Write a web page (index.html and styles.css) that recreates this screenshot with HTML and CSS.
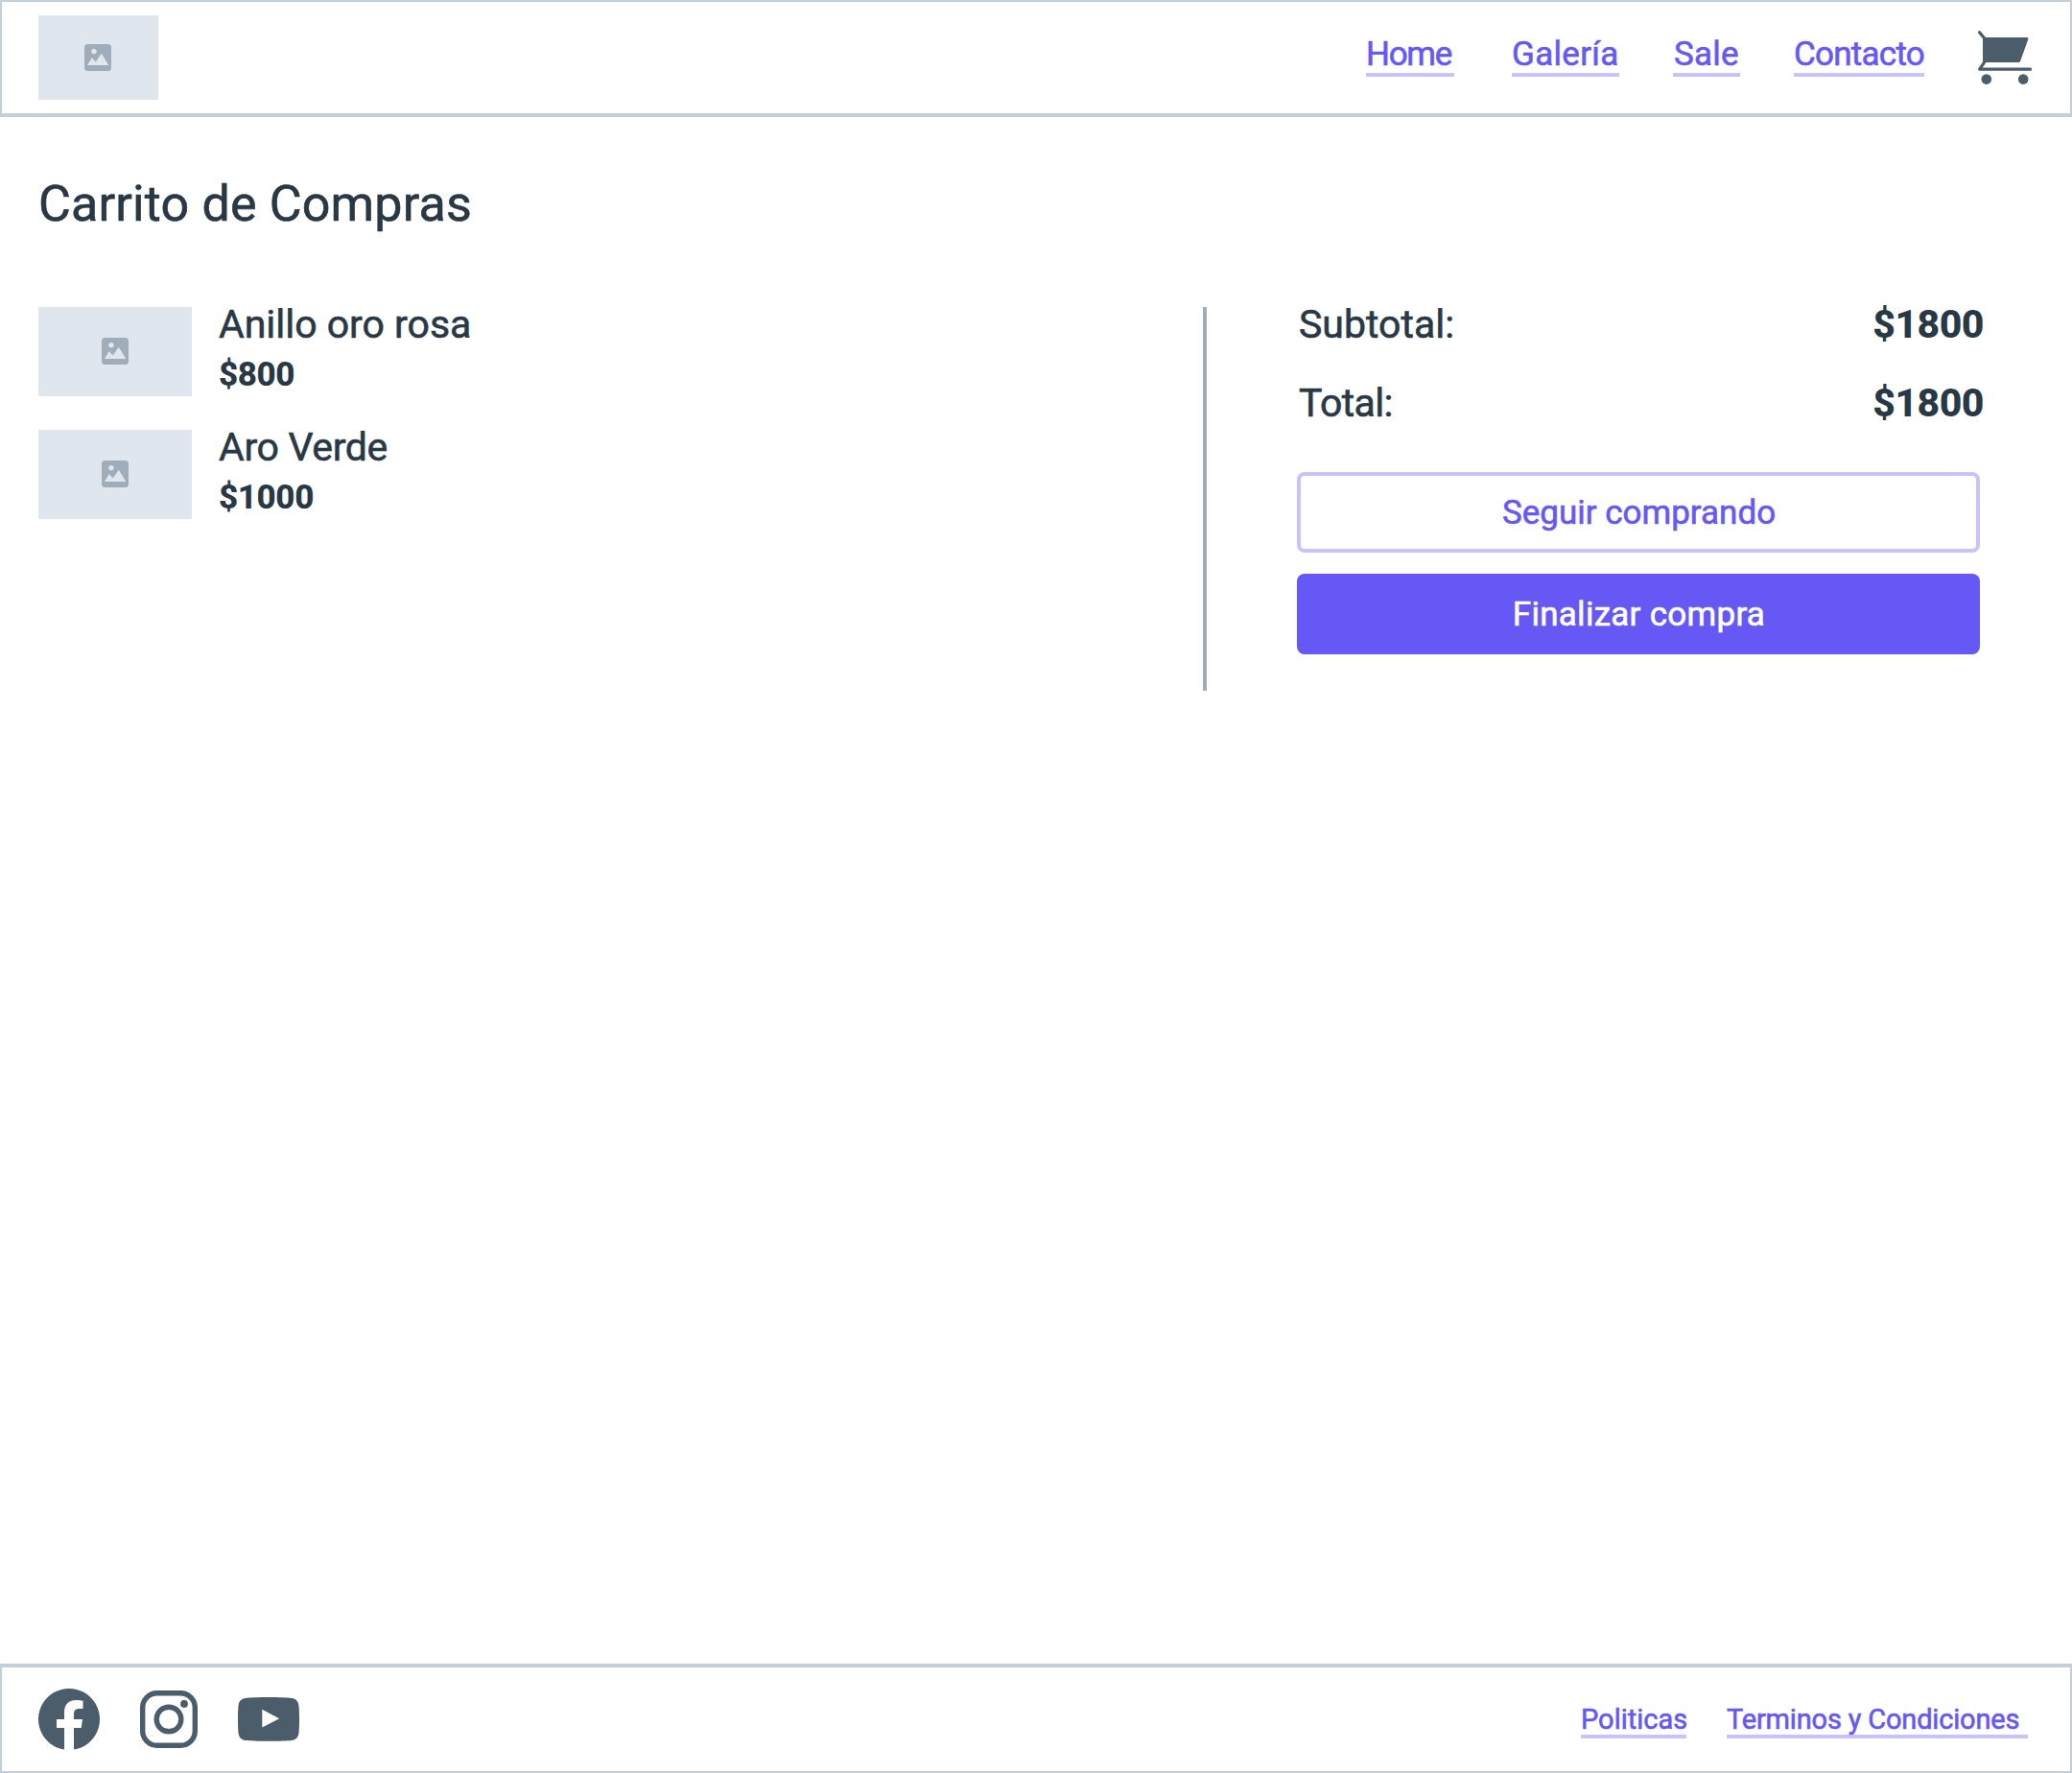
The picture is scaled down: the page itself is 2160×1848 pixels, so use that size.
FILE: index.html
```html
<!DOCTYPE html>
<html lang="es">
<head>
<meta charset="utf-8">
<title>Carrito de Compras</title>
<link rel="stylesheet" href="styles.css">
</head>
<body>
<svg class="sprite" aria-hidden="true">
  <symbol id="picture" viewBox="0 0 28 28">
    <path fill-rule="evenodd" d="M3.5 0H24.5Q28 0 28 3.5V24.5Q28 28 24.5 28H3.5Q0 28 0 24.5V3.5Q0 0 3.5 0ZM9.9 4.9a2.8 2.8 0 1 0 .01 0ZM3 22H25.3L17.8 9.7L11.7 18.6L7.8 14Z"/>
  </symbol>
</svg>
<header class="header">
  <div class="placeholder logo"><svg class="picture"><use href="#picture"/></svg></div>
  <nav class="nav">
    <a class="link home" href="#">Home</a>
    <a class="link gallery" href="#">Galería</a>
    <a class="link sale" href="#">Sale</a>
    <a class="link contact" href="#">Contacto</a>
  </nav>
  <svg class="cart-icon" viewBox="0 0 56 56">
    <path d="M1.600 1.800L7 8.300M6.500 33.200L1.700 40.200H54.500" fill="none" stroke="currentColor" stroke-width="3.200" stroke-linecap="round" stroke-linejoin="round"/>
    <path d="M5 7H51Q52.800 7.200 52.300 9L44 32Q43.600 33 42.600 33H5Z"/>
    <circle cx="8.800" cy="50.600" r="5.300"/>
    <circle cx="47.200" cy="50.600" r="5.300"/>
  </svg>
</header>
<main class="main">
  <h1 class="title">Carrito de Compras</h1>
  <div class="columns">
    <ul class="items">
      <li class="item">
        <div class="placeholder thumb"><svg class="picture"><use href="#picture"/></svg></div>
        <div><p class="name">Anillo oro rosa</p><p class="price">$800</p></div>
      </li>
      <li class="item">
        <div class="placeholder thumb"><svg class="picture"><use href="#picture"/></svg></div>
        <div><p class="name name-short">Aro Verde</p><p class="price">$1000</p></div>
      </li>
    </ul>
    <section class="summary">
      <div class="row"><span class="label">Subtotal:</span><span class="amount">$1800</span></div>
      <div class="row"><span class="label label-total">Total:</span><span class="amount">$1800</span></div>
      <button class="button outline">Seguir comprando</button>
      <button class="button solid">Finalizar compra</button>
    </section>
  </div>
</main>
<footer class="footer">
  <div class="social">
    <svg class="facebook" viewBox="0 0 64 64"><path d="M27 63.6A32 32 0 1 1 37 63.6V41H44.7L46 32H37V27C37 23 38.6 21 42.6 21H46.5V12.8C44.5 12.3 42 12 39.500 12C31.500 12 27 16.600 27 25V32H19V41H27Z"/></svg>
    <svg class="instagram" viewBox="0 0 60 60">
      <rect x="2.700" y="2.700" width="54.600" height="54.600" rx="15" fill="none" stroke="currentColor" stroke-width="5.400"/>
      <circle cx="30" cy="30" r="12.800" fill="none" stroke="currentColor" stroke-width="5.400"/>
      <circle cx="46" cy="14" r="3.900"/>
    </svg>
    <svg class="youtube" viewBox="0 0 64 46"><path fill-rule="evenodd" d="M32 0C43 0 52 .4 56 1C61 1.700 63 4.500 63.500 9C64.200 17 64.200 29 63.500 37C63 41.500 61 44.300 56 45C48 46 16 46 8 45C3 44.300 1 41.500 .5 37C-.2 29-.2 17 .5 9C1 4.500 3 1.700 8 1C12 .4 21 0 32 0ZM25.300 12.800V31.400L43.200 22.200Z"/></svg>
  </div>
  <nav class="legal">
    <a class="link politics" href="#">Politicas</a>
    <a class="link terms" href="#">Terminos y Condiciones</a>
  </nav>
</footer>
</body>
</html>
```
FILE: styles.css
```css
* { box-sizing: border-box; margin: 0; padding: 0; }

body {
  min-height: 1848px;
  display: flex;
  flex-direction: column;
  background: #fff;
  color: #293845;
  font-family: Roboto, "Liberation Sans", sans-serif;
}

svg { display: block; fill: currentColor; }
.sprite { width: 0; height: 0; position: absolute; }

/* slightly heavier than the regular weight */
.link, .title, .name, .label, .button {
  font-weight: 400;
  -webkit-text-stroke: .6px currentColor;
}

.header {
  height: 122px;
  display: flex;
  align-items: center;
  padding: 0 40px 0 38px;
  border: 2px solid #c3cfd9;
  border-bottom-width: 4px;
}

.placeholder {
  display: flex;
  align-items: center;
  justify-content: center;
  background: #dfe6ed;
  color: #9eadb9;
}
.logo { width: 125px; height: 88px; padding-right: 1px; }
.thumb { width: 160px; height: 93.3px; padding-bottom: 2px; }
.picture { width: 28px; height: 28px; }

.nav { display: flex; margin: 0 56px 4px auto; }
.link {
  display: block;
  height: 44px;
  white-space: nowrap;
  color: #6558f5;
  font-size: 35px;
  line-height: 42px;
  text-decoration: none;
  border-bottom: 4px solid #c6c4fb;
}
.home { width: 92px; margin-right: 60px; letter-spacing: -1.3px; }
.gallery { width: 112px; margin-right: 56px; letter-spacing: .3px; }
.sale { width: 70px; margin-right: 56px; padding-left: 1px; letter-spacing: .2px; }
.contact { width: 136px; letter-spacing: -.75px; }

.cart-icon { width: 56px; height: 56px; color: #4b5c6b; }

.main { flex: 1; padding: 58px 96px 0 40px; }
.title {
  font-size: 52px;
  line-height: 66px;
  letter-spacing: .17px;
  margin-bottom: 74px;
}
.columns { display: flex; }
.items { width: 1214px; list-style: none; }
.item { display: flex; gap: 28px; height: 128px; align-items: flex-start; }
.name { font-size: 41px; line-height: 36px; letter-spacing: -.02px; margin-bottom: 14px; }
.name-short { letter-spacing: -.35px; }
.price { font-size: 35px; font-weight: 800; line-height: 42px; letter-spacing: -.4px; }

.summary {
  width: 810px;
  height: 400px;
  padding-left: 94px;
  border-left: 4px solid #9eadb9;
}
.row {
  display: flex;
  justify-content: space-between;
  margin: 0 -4px 46px 2px;
  font-size: 41px;
  line-height: 36px;
}
.label { letter-spacing: .03px; }
.label-total { letter-spacing: -.6px; }
.amount { font-weight: 800; letter-spacing: -.5px; }
.button {
  display: block;
  width: 100%;
  height: 84px;
  padding: 2px 0 0 1px;
  border: 0;
  border-radius: 8px;
  font-family: inherit;
  font-size: 35px;
  line-height: 40px;
}
.outline {
  margin: 54px 0 22px;
  background: #fff;
  border: 4px solid #c6c4fb;
  color: #6558f5;
}
.solid { background: #6558f5; color: #fff; letter-spacing: .27px; }

.footer {
  height: 114px;
  display: flex;
  align-items: center;
  justify-content: space-between;
  padding: 0 44px 0 38px;
  border: 2px solid #c3cfd9;
  border-top-width: 4px;
}
.social { display: flex; align-items: center; color: #4b5c6b; }
.facebook { width: 64px; height: 64px; margin-right: 42px; }
.instagram { width: 60px; height: 60px; margin-right: 42px; }
.youtube { width: 64px; height: 46px; }
.legal { display: flex; gap: 42px; margin-top: 4px; }
.legal .link { height: 36px; font-size: 29px; line-height: 33px; }
.politics { width: 110px; }
.terms { width: 314px; letter-spacing: -.18px; }
```
